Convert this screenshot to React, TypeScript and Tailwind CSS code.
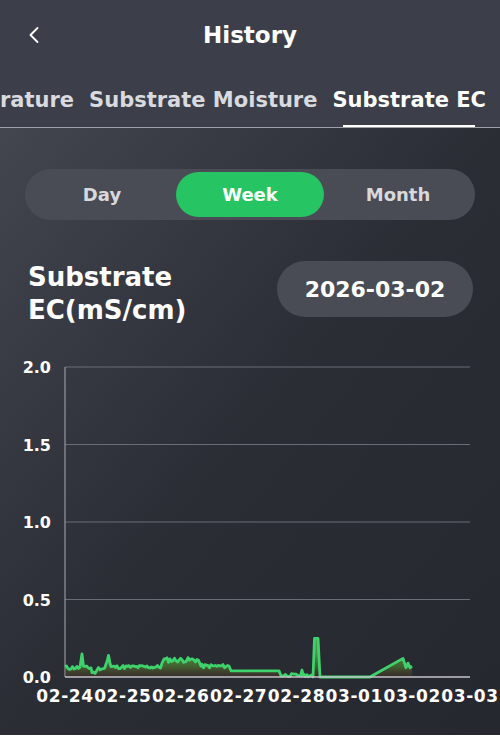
import { ChevronLeft } from "lucide-react";

const FONT = { fontFamily: "'DejaVu Sans', 'Noto Sans', sans-serif" };

// chart geometry, in svg coordinates (svg top sits at page y=340)
const X0 = 65;
const X1 = 470;
const Y_ZERO = 337;
const PX_PER_UNIT = 155;

const Y_TICKS = [2.0, 1.5, 1.0, 0.5, 0.0];
const X_LABELS = ["02-24", "02-25", "02-26", "02-27", "02-28", "03-01", "03-02", "03-03"];

function makeSeed(seed: number) {
  let s = seed;
  return () => {
    s = (s * 9301 + 49297) % 233280;
    return s / 233280;
  };
}

function buildPoints(): [number, number][] {
  const rand = makeSeed(11);
  const pts: [number, number][] = [];
  const noisy = (from: number, to: number, base: number, amp: number) => {
    for (let x = from; x < to; x += 1.5) {
      pts.push([x, base + (rand() - 0.5) * 2 * amp]);
    }
  };
  noisy(65, 81, 0.06, 0.014);
  pts.push([82, 0.15], [83.5, 0.07]);
  noisy(85, 92, 0.06, 0.012);
  noisy(92, 97, 0.03, 0.014);
  noisy(97, 106, 0.055, 0.01);
  pts.push([107, 0.1], [108.5, 0.14], [110, 0.09]);
  noisy(111, 161, 0.065, 0.012);
  pts.push([162, 0.09]);
  noisy(164, 200, 0.11, 0.016);
  pts.push([201, 0.07]);
  noisy(202, 230, 0.07, 0.013);
  pts.push([231, 0.04], [279, 0.04]);
  noisy(281, 301, 0.012, 0.01);
  pts.push([302, 0.045], [303, 0.01]);
  noisy(304, 312, 0.01, 0.008);
  pts.push([313, 0.0], [314.5, 0.25], [318, 0.25], [320, 0.0]);
  pts.push([370, 0.0], [403, 0.12], [406, 0.06], [408, 0.09], [410, 0.06], [412, 0.07]);
  return pts;
}

const POINTS = buildPoints();
const toY = (v: number) => Y_ZERO - Math.max(v, 0) * PX_PER_UNIT;
const LINE = POINTS.map(([x, v], i) => `${i ? "L" : "M"}${x.toFixed(1)},${toY(v).toFixed(1)}`).join(" ");
const AREA = `${LINE} L412,${Y_ZERO} L65,${Y_ZERO} Z`;

function EcChart() {
  const step = (X1 - X0) / 7;
  return (
    <svg width={500} height={380} viewBox="0 0 500 380" className="block">
      <defs>
        <linearGradient id="ecFill" x1="0" y1="312" x2="0" y2={Y_ZERO} gradientUnits="userSpaceOnUse">
          <stop offset="0" stopColor="#4cb84f" stopOpacity="0.8" />
          <stop offset="0.6" stopColor="#4f7a2e" stopOpacity="0.65" />
          <stop offset="1" stopColor="#5c3420" stopOpacity="0.3" />
        </linearGradient>
      </defs>
      {Y_TICKS.map((t) => {
        const y = toY(t);
        return (
          <g key={t}>
            {t > 0 && <line x1={X0} x2={X1} y1={y} y2={y} stroke="#6b6d76" strokeWidth={1} />}
            <text x={51} y={y + 6} textAnchor="end" fill="#ffffff" fontSize={16} fontWeight={700} style={FONT}>
              {t.toFixed(1)}
            </text>
          </g>
        );
      })}
      <line x1={X0} x2={X0} y1={toY(2)} y2={Y_ZERO} stroke="#a9abb2" strokeWidth={1} />
      <path d={AREA} fill="url(#ecFill)" />
      <path d={LINE} fill="none" stroke="#3fd26c" strokeWidth={2.8} strokeLinejoin="round" />
      <line x1={X0} x2={X1} y1={Y_ZERO} y2={Y_ZERO} stroke="#c4c5ca" strokeWidth={1.5} />
      {X_LABELS.map((label, i) => (
        <text
          key={label}
          x={X0 + i * step}
          y={362}
          textAnchor="middle"
          fill="#ffffff"
          fontSize={17}
          fontWeight={700}
          letterSpacing={0.6}
          style={FONT}
        >
          {label}
        </text>
      ))}
    </svg>
  );
}

export default function App() {
  return (
    <div className="h-[736px] w-[500px] overflow-hidden text-white" style={FONT}>
      <header className="bg-[#3c3f49]">
        <div className="relative flex h-[70px] items-center justify-center">
          <ChevronLeft className="absolute left-[20px] top-[21px] h-[28px] w-[28px] text-white" strokeWidth={1.6} />
          <h1 className="text-[23px] font-bold">History</h1>
        </div>
        <nav className="flex h-[58px] justify-end gap-[15px] overflow-hidden whitespace-nowrap border-b border-[#9fa1a8] pr-[14px] text-[21px] font-bold">
          <span className="shrink-0 pt-[15px] text-[#d9dadf]">Substrate Temperature</span>
          <span className="shrink-0 pt-[15px] text-[#d9dadf]">Substrate Moisture</span>
          <span className="flex shrink-0 flex-col items-center pt-[15px] text-white">
            Substrate EC
            <span className="mt-auto h-[2px] w-[132px] bg-white" />
          </span>
        </nav>
      </header>
      <main className="h-[607px] bg-gradient-to-br from-[#43464f] via-[#2b2d35] to-[#262830]">
        <div className="px-[25px] pt-[41px]">
          <div className="grid h-[51px] grid-cols-3 rounded-full bg-[#4a4c55] p-[3px] text-[18px] font-bold">
            <div className="flex items-center justify-center text-[#d8d9dd]">Day</div>
            <div className="flex items-center justify-center rounded-full bg-[#27c463] text-white">Week</div>
            <div className="flex items-center justify-center text-[#d8d9dd]">Month</div>
          </div>
        </div>
        <div className="mt-[41px] flex items-start justify-between pl-[28px] pr-[27px]">
          <h2 className="text-[26px] font-bold leading-[33px]">
            Substrate
            <br />
            EC(mS/cm)
          </h2>
          <div className="flex h-[56px] w-[196px] items-center justify-center rounded-full bg-[#4a4c55] text-[22px] font-bold">
            2026-03-02
          </div>
        </div>
        <div className="mt-[13px]">
          <EcChart />
        </div>
      </main>
    </div>
  );
}
